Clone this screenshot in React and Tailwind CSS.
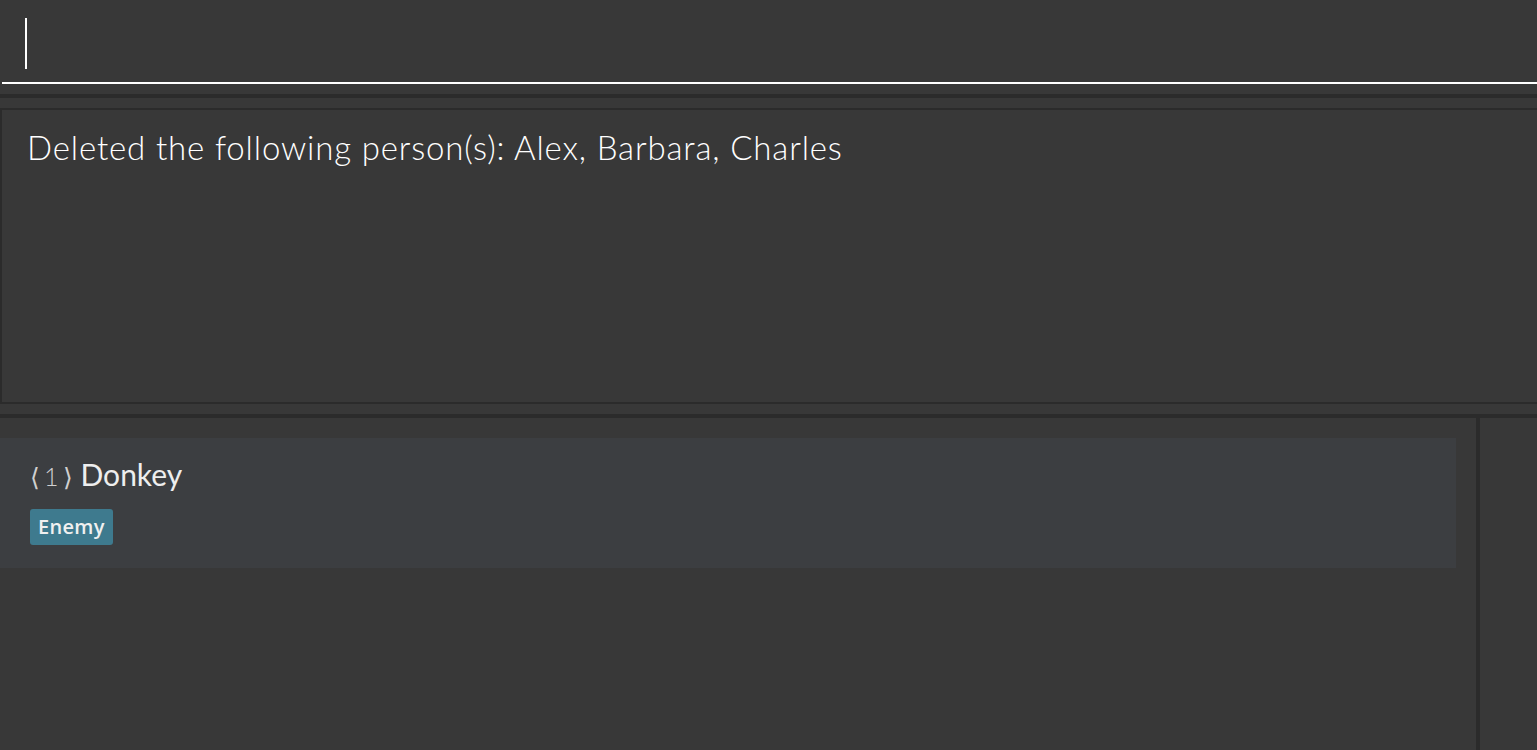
export default function App() {
  return (
    <div className="h-[750px] w-full bg-[#383838] flex flex-col overflow-hidden">
      <div className="h-[94px] shrink-0 pl-[2px]">
        <div className="h-[84px] border-b-2 border-white relative">
          <div className="absolute left-[23px] top-[18px] w-[2px] h-[51px] bg-white" />
        </div>
      </div>
      <div className="h-[4px] shrink-0 bg-[#2b2b2b]" />
      <div className="h-[10px] shrink-0" />
      <div className="h-[296px] shrink-0 border-2 border-r-0 border-[#2b2b2b] pl-[25px] pt-[17px]">
        <p className="text-white font-[Lato,sans-serif] font-light text-[33px] leading-[40px] tracking-[0.85px]">
          Deleted the following person(s): Alex, Barbara, Charles
        </p>
      </div>
      <div className="h-[10px] shrink-0" />
      <div className="h-[4px] shrink-0 bg-[#2b2b2b]" />
      <div className="flex-1 flex min-h-0">
        <div className="w-[1476px] shrink-0 pt-[20px] pr-[20px]">
          <div className="h-[130px] bg-[#3c3e41] pl-[30px] pt-[14px]">
            <div className="flex items-baseline gap-[4px] font-[Lato,sans-serif]">
              <span className="text-[#d0d0d0] text-[25px] font-light tracking-[4px]">⟨1⟩</span>
              <span className="text-[#eeeeee] text-[30px]">Donkey</span>
            </div>
            <div className="mt-[12px]">
              <span className="inline-flex items-center h-[36px] px-[8px] rounded-[3px] bg-[#3e7a8e] text-[#f0f0f0] font-['Open_Sans',sans-serif] font-semibold text-[20px] tracking-[0.3px]">
                Enemy
              </span>
            </div>
          </div>
        </div>
        <div className="w-[4px] shrink-0 bg-[#2b2b2b]" />
        <div className="flex-1" />
      </div>
    </div>
  );
}
